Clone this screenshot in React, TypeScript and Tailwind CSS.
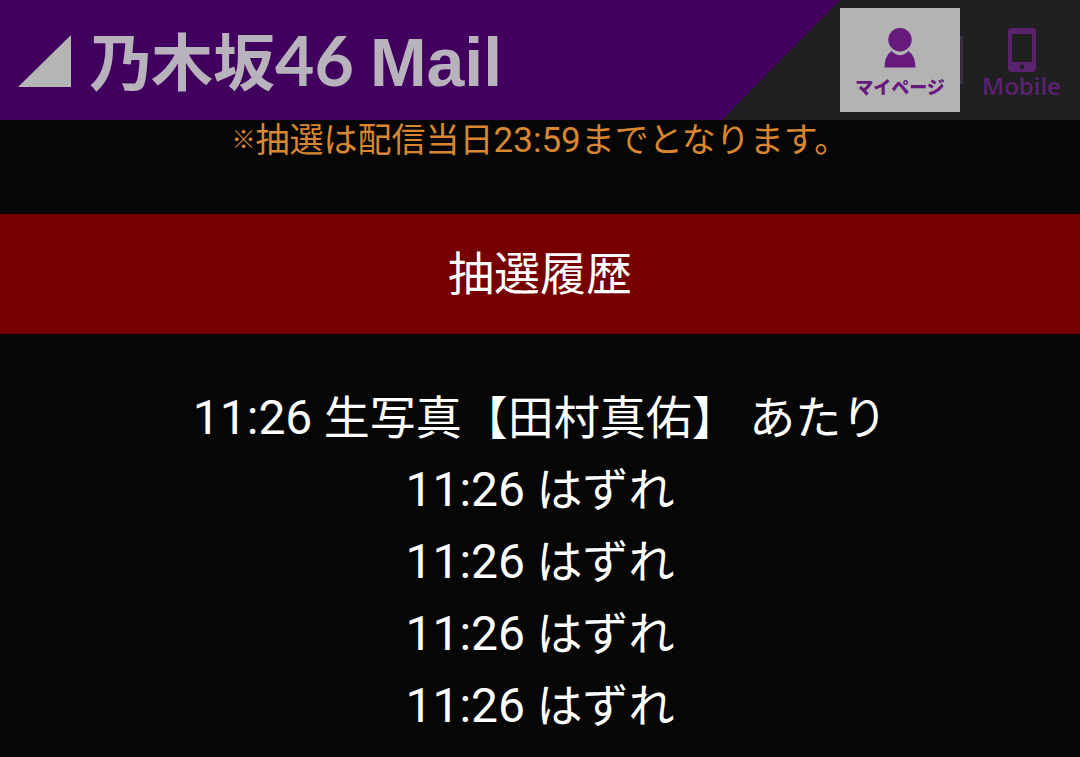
import React from 'react';

interface HistoryItem {
    time: string;
    result: string;
}

const history: HistoryItem[] = [
    { time: "11:26", result: "生写真【田村真佑】 あたり" },
    { time: "11:26", result: "はずれ" },
    { time: "11:26", result: "はずれ" },
    { time: "11:26", result: "はずれ" },
    { time: "11:26", result: "はずれ" },
];

const Logo: React.FC = () => {
    return (
        <a href="#" className="flex items-center text-[#b8b2bc] font-bold whitespace-nowrap leading-none">
            <svg className="w-[53px] h-[52px] mr-[18px] shrink-0" viewBox="0 0 53 52" fill="#b5b5b5" aria-hidden="true">
                <path d="M53 0V52H0Z" />
            </svg>
            <span className="flex items-baseline">
                <span className="text-[62px] font-['Noto_Sans_CJK_JP',sans-serif]">乃木坂</span>
                <span className="text-[68px] font-[Lato,sans-serif]">46</span>
                <span className="ml-4 text-[68px] font-['Liberation_Sans',sans-serif]">Mail</span>
            </span>
        </a>
    );
};

const Header: React.FC = () => {
    return (
        <header className="sticky top-0 flex h-[120px] bg-[#202020]">
            <div className="flex flex-1 items-center pl-[18px] pt-0.5 bg-[#41005e] [clip-path:polygon(0_0,100%_0,calc(100%-118px)_100%,0_100%)]">
                <Logo />
            </div>
            <nav className="flex shrink-0 items-center">
                <a href="#mypage" className="flex flex-col items-center w-[120px] h-[104px] pt-5 bg-[#b3b3b3] text-[#651a7c]">
                    <svg className="w-8 h-10" viewBox="0 0 32 40" fill="currentColor" aria-hidden="true">
                        <path d="M7.500 23Q16 31.500 24.500 23Q31.500 28 31.500 39.500H.5Q.5 28 7.500 23Z" />
                        <circle cx="16" cy="11.700" r="11.700" />
                    </svg>
                    <span className="mt-[6px] text-[18px] leading-6 font-black font-['Noto_Sans_CJK_JP',sans-serif]">マイページ</span>
                </a>
                <span className="w-[3px] h-12 bg-[#3b2d40]" />
                <a href="#mobile" className="flex flex-col items-center w-[117px] h-[104px] pt-5 text-[#5a2370]">
                    <svg className="w-[30px] h-[44px]" viewBox="0 0 30 44" aria-hidden="true">
                        <path
                            fill="currentColor"
                            fillRule="evenodd"
                            d="M5 0H25Q29 0 29 4V40Q29 44 25 44H5Q1 44 1 40V4Q1 0 5 0ZM5 6V34H25V6ZM15 36.500A2.400 2.400 0 1 0 15 41.300A2.400 2.400 0 1 0 15 36.500Z"
                        />
                    </svg>
                    <span className="mt-[2px] text-[24px] leading-6 font-semibold font-['Open_Sans',sans-serif]">Mobile</span>
                </a>
            </nav>
        </header>
    );
};

const App: React.FC = () => {
    return (
        <div lang="ja" className="min-h-screen bg-[#060606] text-white font-[Roboto,'Noto_Sans_CJK_JP',sans-serif]">
            <Header />

            <main className="text-center">
                <p className="flex items-center justify-center pb-[54px] text-[34px] leading-10 text-[#d8862f]">
                    <span className="text-[24px] font-bold">※</span>
                    <span>抽選は配信当日<span className="text-[35px] leading-none">23:59</span>までとなります。</span>
                </p>

                <h1 className="bg-[#760000] text-[46px] leading-[120px]">抽選履歴</h1>

                <ul className="py-12 text-[46px] leading-[72px]">
                    {history.map((item, index) => (
                        <li key={index}>
                            <span className="text-[48px] leading-none">{item.time}</span> {item.result}
                        </li>
                    ))}
                </ul>
            </main>
        </div>
    );
};

export default App;
